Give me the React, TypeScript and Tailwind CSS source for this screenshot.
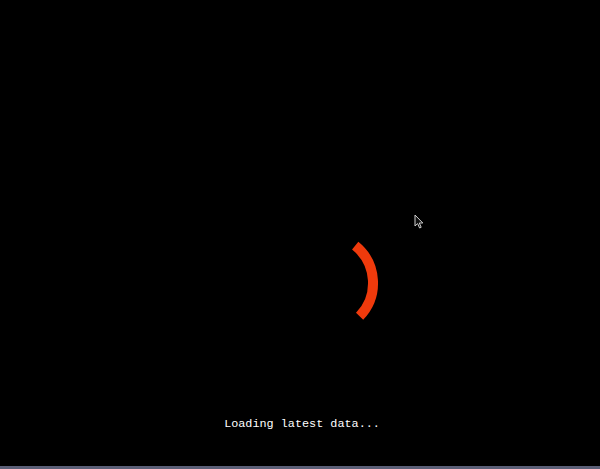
import React from "react";

export default function App() {
  return (
    <div className="relative flex h-[469px] w-[600px] flex-col bg-black">
      {/* spinner + status */}
      <div className="flex flex-1 flex-col items-center pt-[223px]">
        <svg className="ml-[50px] h-[120px] w-[120px]" viewBox="0 0 120 120" fill="none">
          <path d="M90.2 22.7 A48 48 0 0 1 94.6 93.3" stroke="#ef3a0c" strokeWidth="10" />
        </svg>
        <p
          className="mt-[73px] ml-[4px] text-[11.8px] leading-4 text-white"
          style={{ fontFamily: '"Liberation Mono", "DejaVu Sans Mono", monospace' }}
        >
          Loading latest data...
        </p>
      </div>
      <div className="h-[3px] bg-[#5b5f77]" />

      {/* mouse pointer */}
      <svg className="absolute left-[414px] top-[214px] h-[15px] w-[11px]" viewBox="0 0 11 15" fill="none">
        <path d="M1 1 L1 12 L3.6 9.6 L5.6 14 L7.2 13.3 L5.3 9 L8.8 9 Z" fill="#111" stroke="#cfcfcf" strokeWidth="1" />
      </svg>
    </div>
  );
}
